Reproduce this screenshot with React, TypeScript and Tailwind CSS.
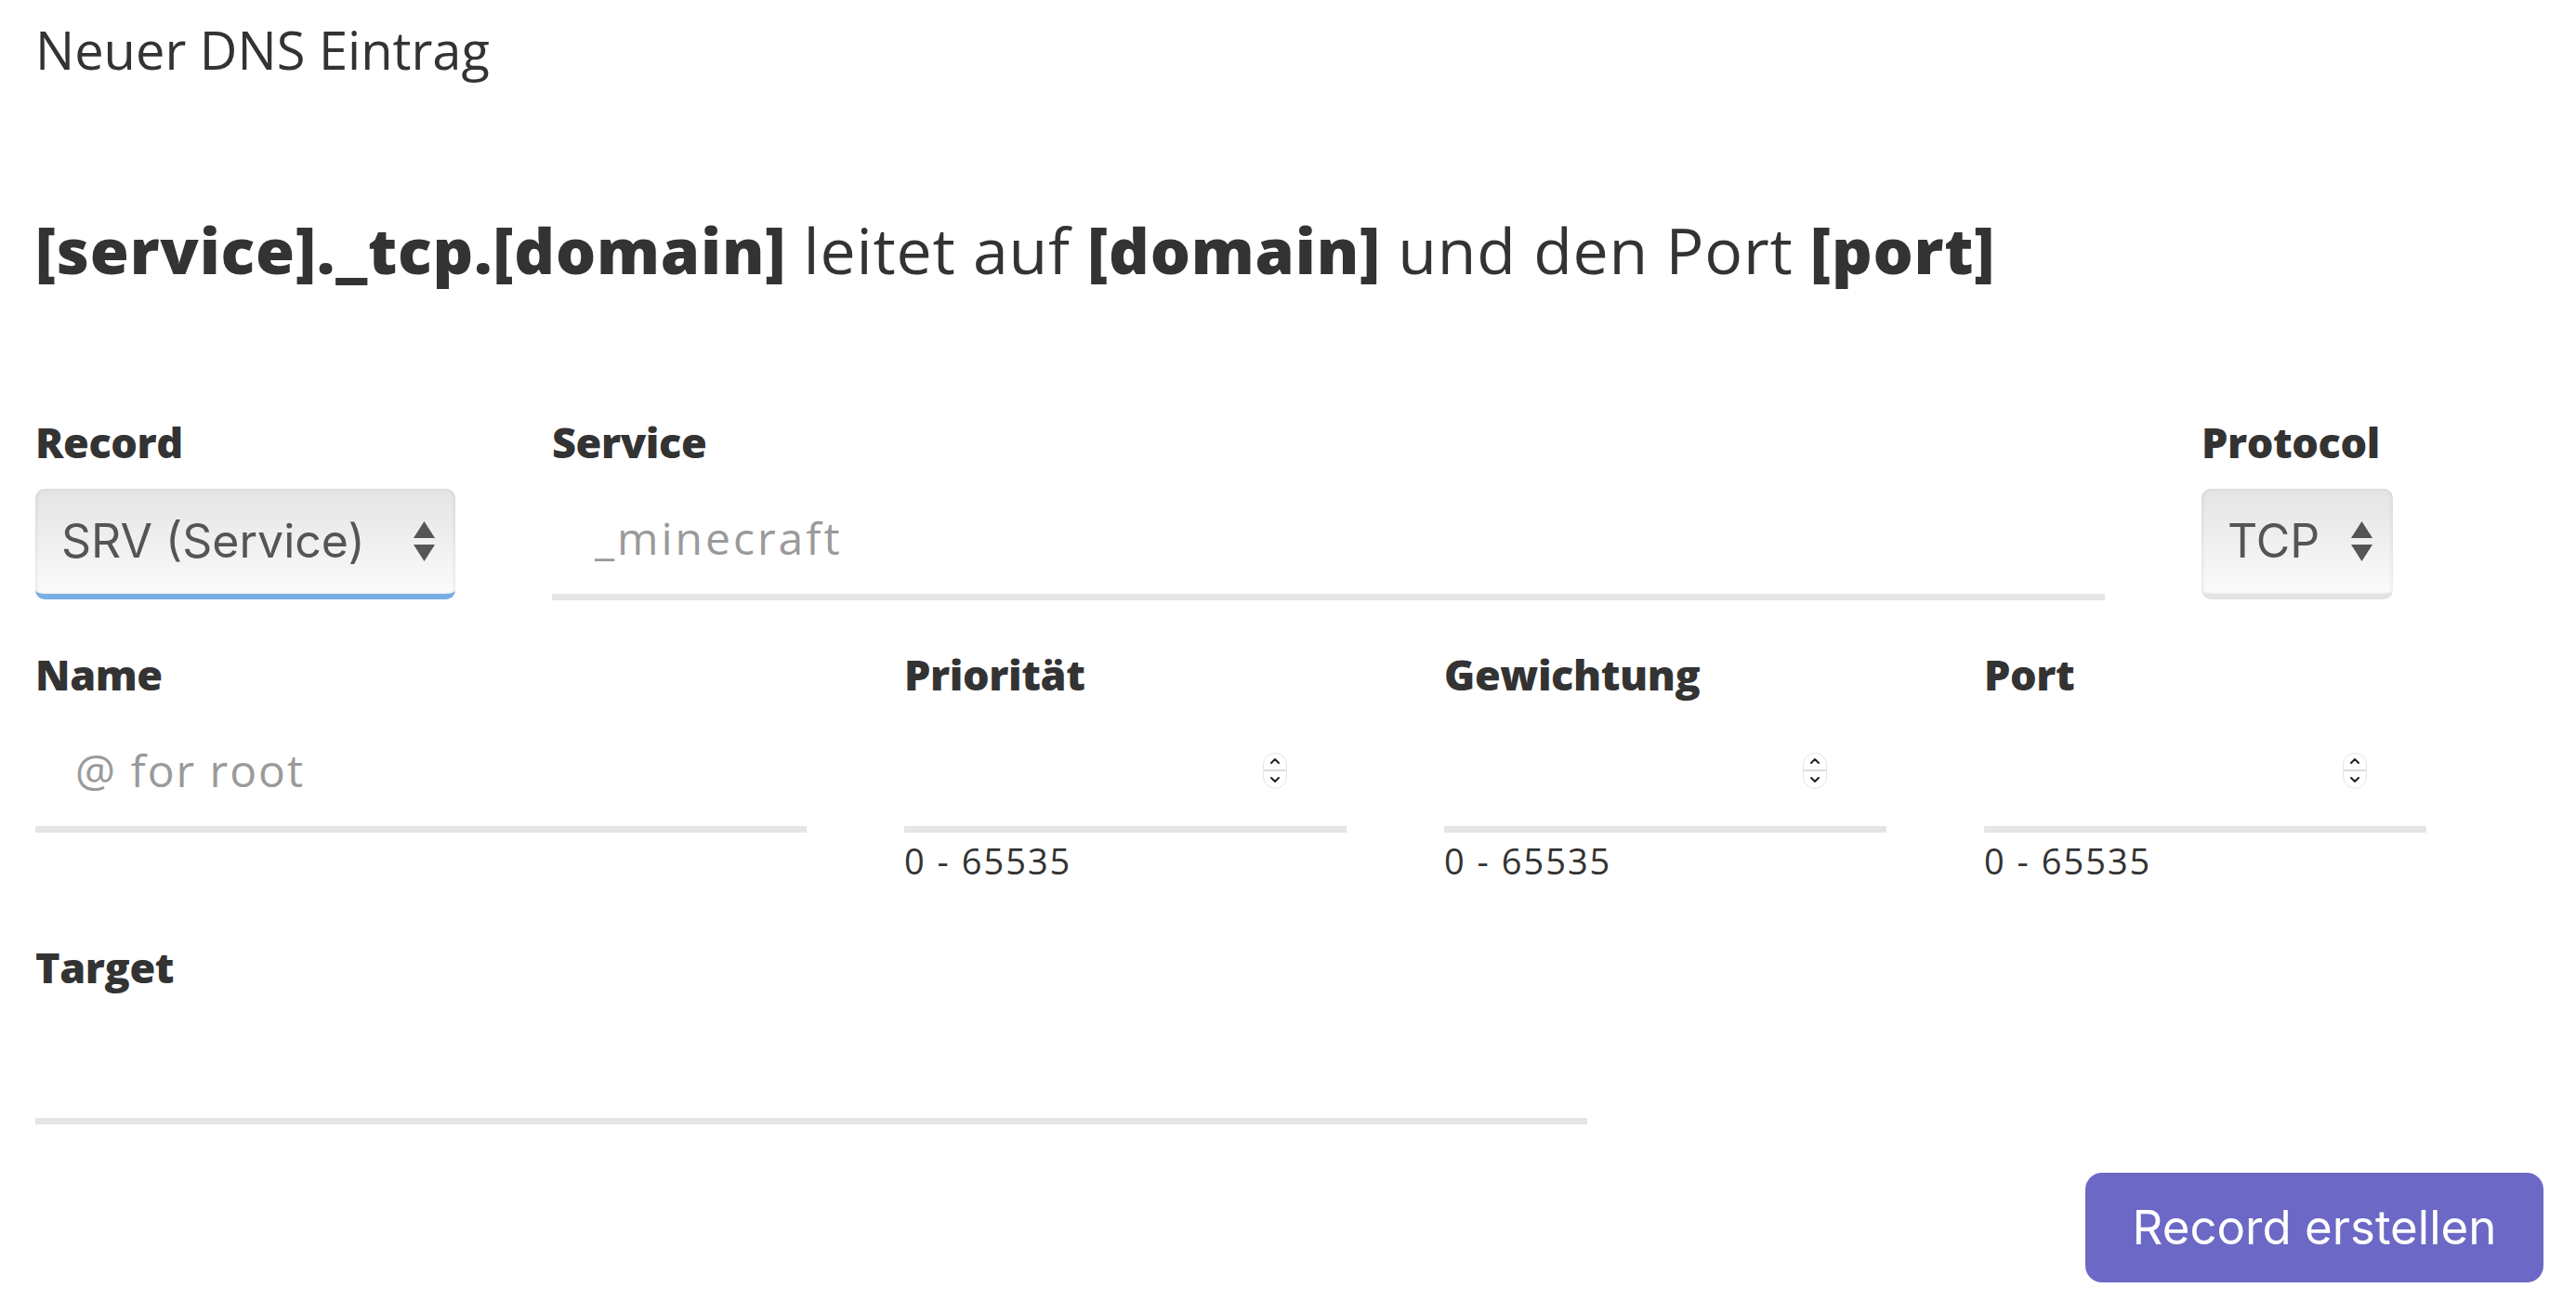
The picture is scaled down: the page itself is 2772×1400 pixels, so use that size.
import { ChevronUp, ChevronDown } from "lucide-react";

const numberFields = ["Priorität", "Gewichtung", "Port"] as const;

function Label({ children }: { children: React.ReactNode }) {
  return (
    <div className="font-['Open_Sans',sans-serif] text-[45px] leading-none font-extrabold tracking-[-0.4px] text-[#333]">
      {children}
    </div>
  );
}

function SelectArrows() {
  return (
    <svg width="23" height="43" viewBox="0 0 23 43" className="shrink-0">
      <path d="M11.5 0 L23 18 L0 18 Z" fill="#555" />
      <path d="M0 25 L23 25 L11.5 43 Z" fill="#555" />
    </svg>
  );
}

function FakeSelect({ value, focused }: { value: string; focused?: boolean }) {
  return (
    <div
      className={
        "flex h-[119px] items-center justify-between rounded-[10px] border-b-[6px] bg-gradient-to-b from-[#e4e4e4] to-[#fbfbfb] pl-[28px] pr-[22px] shadow-[inset_2px_0_3px_rgba(0,0,0,0.06),inset_-2px_0_3px_rgba(0,0,0,0.06)] " +
        (focused ? "border-[#78ade6]" : "border-[#e3e3e3]")
      }
    >
      <span className="font-['Inter',sans-serif] text-[50px] text-[#555]">{value}</span>
      <SelectArrows />
    </div>
  );
}

function Spinner() {
  return (
    <div className="flex h-[39px] w-[26px] flex-col items-center overflow-hidden rounded-full border border-[#e6e6e6] bg-white">
      <div className="flex flex-1 items-center justify-center">
        <ChevronUp size={16} strokeWidth={3} color="#222" />
      </div>
      <div className="h-[2px] w-full bg-[#dedede]" />
      <div className="flex flex-1 items-center justify-center">
        <ChevronDown size={16} strokeWidth={3} color="#222" />
      </div>
    </div>
  );
}

function TextField({ placeholder }: { placeholder?: string }) {
  return (
    <div className="mt-[21px] flex h-[127px] items-center border-b-[7px] border-[#e5e5e5] pl-[43px]">
      <span className="font-['Open_Sans',sans-serif] text-[48px] tracking-[2px] text-[#9a9a9a]">
        {placeholder}
      </span>
    </div>
  );
}

export default function App() {
  return (
    <div className="min-h-screen bg-white pt-[25px] pr-[35px] pl-[38px] font-['Open_Sans',sans-serif] text-[#333]">
      <h2 className="text-[56px] leading-none font-normal">Neuer DNS Eintrag</h2>

      <h1 className="mt-[154px] text-[68px] leading-none font-normal tracking-[0.8px]">
        <b className="font-extrabold">[service]._tcp.[domain]</b> leitet auf{" "}
        <b className="font-extrabold">[domain]</b> und den Port <b className="font-extrabold">[port]</b>
      </h1>

      <div className="mt-[150px] flex items-start gap-[104px]">
        <div className="w-[452px]">
          <Label>Record</Label>
          <div className="mt-[28px]">
            <FakeSelect value="SRV (Service)" focused />
          </div>
        </div>
        <div className="w-[1671px]">
          <Label>Service</Label>
          <div className="mt-[21px] flex h-[127px] items-center border-b-[7px] border-[#e5e5e5] pl-[46px]">
            <span className="text-[48px] tracking-[3px] text-[#9a9a9a]">_minecraft</span>
          </div>
        </div>
        <div className="w-[206px]">
          <Label>Protocol</Label>
          <div className="mt-[28px]">
            <FakeSelect value="TCP" />
          </div>
        </div>
      </div>

      <div className="mt-[57px] flex items-start gap-[105px]">
        <div className="w-[830px]">
          <Label>Name</Label>
          <TextField placeholder="@ for root" />
        </div>
        {numberFields.map((f) => (
          <div key={f} className="w-[476px]">
            <Label>{f}</Label>
            <div className="mt-[21px] flex h-[127px] items-center justify-end border-b-[7px] border-[#e5e5e5] pr-[64px]">
              <Spinner />
            </div>
            <div className="mt-[11px] text-[38px] leading-none tracking-[2px] text-[#333]">0 - 65535</div>
          </div>
        ))}
      </div>

      <div className="mt-[73px] w-[1670px]">
        <Label>Target</Label>
        <div className="mt-[20px] h-[127px] border-b-[7px] border-[#e5e5e5]" />
      </div>

      <div className="mt-[52px] flex justify-end">
        <button className="h-[118px] w-[493px] rounded-[18px] bg-[#6b69c5] font-['Inter',sans-serif] text-[51px] text-white">
          Record erstellen
        </button>
      </div>
    </div>
  );
}
